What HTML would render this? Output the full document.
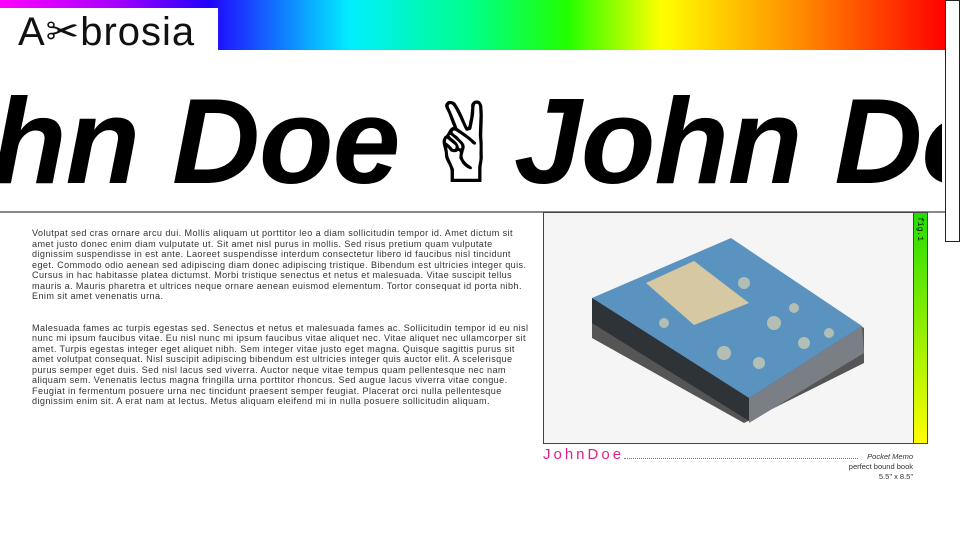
<!DOCTYPE html>
<html><head><meta charset="utf-8"><style>
*{margin:0;padding:0;box-sizing:border-box}
body{width:960px;height:540px;overflow:hidden;background:#fff;position:relative;font-family:"Liberation Sans",sans-serif}
.bar{position:absolute;left:0;top:0;width:945px;height:50px;background:linear-gradient(90deg,#f0f 0%,#a0f 12%,#20f 22%,#0ef 37%,#0f8 50%,#2f0 60%,#ff0 70%,#f80 85%,#f00 100%)}
.logo{position:absolute;left:0;top:8px;width:218px;height:42px;background:#fff}
.logo span{position:absolute;left:18px;top:1px;font-size:40px;color:#111;letter-spacing:1px}
.side{position:absolute;left:945px;top:0;width:15px;height:242px;border:1px solid #222;background:#fff}
.tclip{position:absolute;left:0;top:66px;width:942px;height:145px;overflow:hidden}
.t{position:absolute;top:0;font-size:122px;font-weight:bold;font-style:italic;white-space:nowrap;color:#000;line-height:150px;letter-spacing:-1px}
.hand{position:absolute;left:418px;top:18px;font-family:"DejaVu Sans",sans-serif;font-size:110px;line-height:120px;transform:scaleX(1.05);transform-origin:left}
.hr{position:absolute;left:0;top:211px;width:945px;height:2px;background:#888}
.txt{position:absolute;left:32px;top:228px;width:500px;font-size:9.1px;line-height:10.5px;color:#333;letter-spacing:0.4px}
.txt p{margin-bottom:21px}
.img{position:absolute;left:543px;top:212px;width:371px;height:232px;border:1px solid #444;background:#f5f5f5;overflow:hidden}
.strip{position:absolute;left:913px;top:212px;width:15px;height:232px;background:linear-gradient(#2d0,#ff0);border:1px solid #444}
.strip span{position:absolute;left:1px;top:4px;font-family:"Liberation Mono",monospace;font-size:8px;writing-mode:vertical-rl}
.sig{position:absolute;left:543px;top:446px;font-family:"Liberation Sans",sans-serif;font-size:15px;color:#e0208a;letter-spacing:3px}
.dots{position:absolute;left:624px;top:458px;width:234px;border-bottom:1px dotted #777}
.cap{position:absolute;right:47px;top:452px;font-size:7.5px;line-height:10px;color:#333;text-align:right}
</style></head><body>
<div class="bar"></div>
<div class="logo"><span>A✂brosia</span></div>
<div class="side"></div>
<div class="tclip">
<div class="t" style="left:-8px">hn Doe</div>
<div class="hand">✌</div>
<div class="t" style="left:514px">John Doe</div>
</div>
<div class="hr"></div>
<div class="txt">
<p>Volutpat sed cras ornare arcu dui. Mollis aliquam ut porttitor leo a diam sollicitudin tempor id. Amet dictum sit amet justo donec enim diam vulputate ut. Sit amet nisl purus in mollis. Sed risus pretium quam vulputate dignissim suspendisse in est ante. Laoreet suspendisse interdum consectetur libero id faucibus nisl tincidunt eget. Commodo odio aenean sed adipiscing diam donec adipiscing tristique. Bibendum est ultricies integer quis. Cursus in hac habitasse platea dictumst. Morbi tristique senectus et netus et malesuada. Vitae suscip&shy;it tellus mauris a. Mauris pharetra et ultrices neque ornare aenean euismod elementum. Tortor consequat id porta nibh. Enim sit amet venenatis urna.</p>
<p>Malesuada fames ac turpis egestas sed. Senectus et netus et malesuada fames ac. Sollicitudin tempor id eu nisl nunc mi ipsum faucibus vitae. Eu nisl nunc mi ipsum faucibus vitae aliquet nec. Vitae aliquet nec ullam&shy;corper sit amet. Turpis egestas integer eget aliquet nibh. Sem integer vitae justo eget magna. Quisque sagit&shy;tis purus sit amet volutpat consequat. Nisl suscipit adipiscing bibendum est ultricies integer quis auctor elit. A scelerisque purus semper eget duis. Sed nisl lacus sed viverra. Auctor neque vitae tempus quam pellen&shy;tesque nec nam aliquam sem. Venenatis lectus magna fringilla urna porttitor rhoncus. Sed augue lacus viver&shy;ra vitae congue. Feugiat in fermentum posuere urna nec tincidunt praesent semper feugiat. Placerat orci nulla pellentesque dignissim enim sit. A erat nam at lectus. Metus aliquam eleifend mi in nulla posuere sollicitudin aliquam.</p>
</div>
<div class="img"><svg width="371" height="232" viewBox="0 0 371 232">
<polygon points="48,87 187,27 320,115 320,150 200,210 48,125" fill="#555"/>
<polygon points="48,85 187,25 318,113 205,185" fill="#5b93c0"/>
<polygon points="48,85 205,185 205,208 48,110" fill="#2e3338"/>
<polygon points="205,185 318,113 320,140 205,210" fill="#7a7f86"/>
<polygon points="102,70 150,48 205,90 150,112" fill="#d6c8a2"/>
<g fill="#d9d2b0" opacity="0.7"><circle cx="200" cy="70" r="6"/><circle cx="230" cy="110" r="7"/><circle cx="260" cy="130" r="6"/><circle cx="180" cy="140" r="7"/><circle cx="120" cy="110" r="5"/><circle cx="250" cy="95" r="5"/><circle cx="215" cy="150" r="6"/><circle cx="285" cy="120" r="5"/></g>
</svg></div>
<div class="strip"><span>fig.1</span></div>
<div class="sig">JohnDoe</div>
<div class="dots"></div>
<div class="cap"><i>Pocket Memo</i><br>perfect bound book<br>5.5" x 8.5"</div>
</body></html>
